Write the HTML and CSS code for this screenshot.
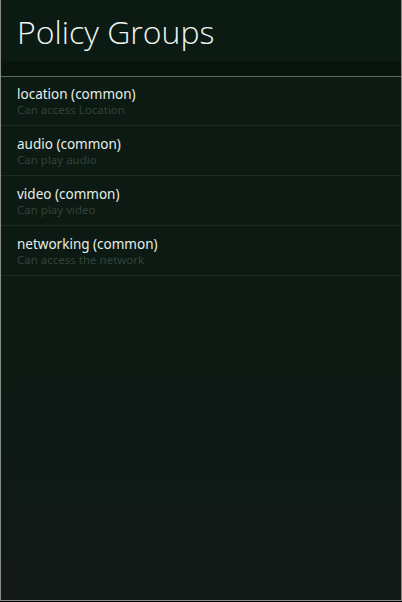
FILE: index.html
```html
<!DOCTYPE html>
<html>
<head>
<meta charset="utf-8">
<link rel="stylesheet" href="styles.css">
</head>
<body>
<div class="app">
  <header class="header">
    <h1 class="title">Policy Groups</h1>
  </header>
  <ul class="list">
    <li class="item"><div class="item-title">location (common)</div><div class="item-sub">Can access Location</div></li>
    <li class="item"><div class="item-title">audio (common)</div><div class="item-sub">Can play audio</div></li>
    <li class="item"><div class="item-title">video (common)</div><div class="item-sub">Can play video</div></li>
    <li class="item"><div class="item-title">networking (common)</div><div class="item-sub">Can access the network</div></li>
  </ul>
</div>
</body>
</html>
```
FILE: styles.css
```css
html, body {
  margin: 0;
  padding: 0;
  background: #000;
}
.app {
  box-sizing: border-box;
  width: 402px;
  height: 601px;
  border: 1px solid #8a8a84;
  border-top: none;
  background: linear-gradient(#0b1a12 0%, #0c1a13 45%, #0e1a15 75%, #131918 100%);
  font-family: "Noto Sans", sans-serif;
  display: flex;
  flex-direction: column;
}
.header {
  height: 77px;
  box-sizing: border-box;
  border-bottom: 1px solid #5e6862;
  background: linear-gradient(#0b1a12 0px, #0b1a12 61px, #09140e 61px, #09140e 76px);
}
.title {
  margin: 0;
  padding: 12px 0 0 16px;
  font-family: "Open Sans", sans-serif;
  font-weight: 300;
  font-size: 32px;
  line-height: 40px;
  color: #eef5f0;
}
.list {
  list-style: none;
  margin: 0;
  padding: 0;
}
.item {
  height: 50px;
  border-bottom: 1px solid #1f2a24;
  padding: 9px 0 0 16px;
  box-sizing: border-box;
}
.item:first-child {
  height: 49px;
  padding-top: 8px;
}
.item-title {
  font-size: 13.5px;
  line-height: 18px;
  color: #e6efe9;
}
.item-sub {
  font-size: 11.5px;
  line-height: 14px;
  color: #32433a;
}
```
